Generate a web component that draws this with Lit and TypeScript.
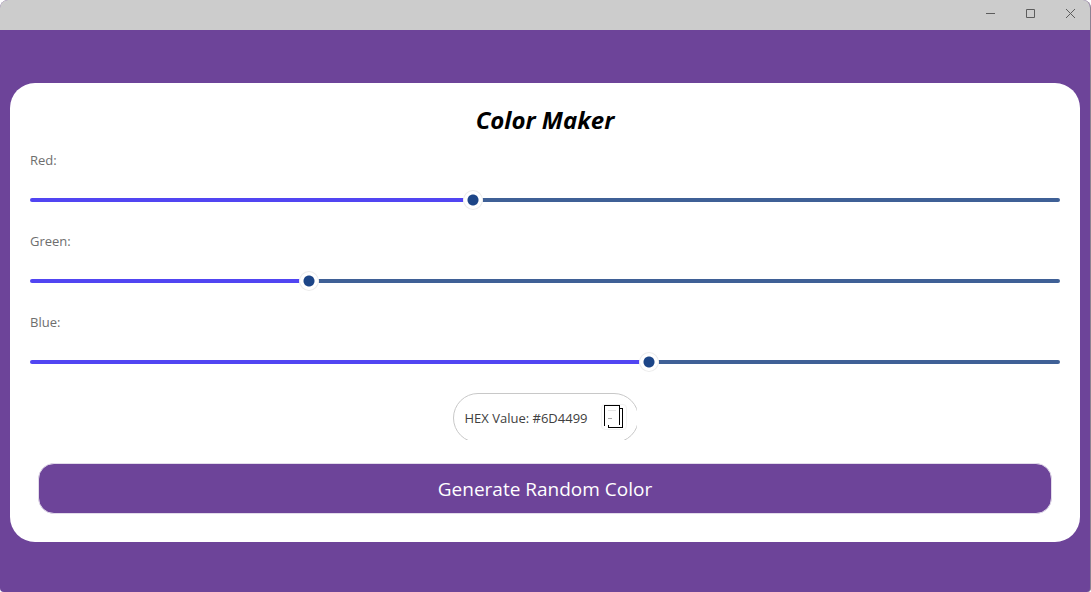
import { LitElement, html, css } from "lit";
import { customElement, property, state } from "lit/decorators.js";

@customElement("window-bar")
class WindowBar extends LitElement {
  static styles = css`
    :host {
      display: flex;
      justify-content: flex-end;
      height: 30px;
      background: #cccccc;
    }
    .control {
      width: 40px;
      height: 27px;
      padding: 0;
      border: 0;
      background: none;
      display: grid;
      place-items: center;
    }
    svg {
      width: 11px;
      height: 11px;
      fill: none;
      stroke: #5c5c5c;
    }
  `;

  render() {
    return html`
      <button class="control" aria-label="Minimize">
        <svg viewBox="0 0 11 11"><path d="M1 5.5H10" /></svg>
      </button>
      <button class="control" aria-label="Maximize">
        <svg viewBox="0 0 11 11"><path d="M1.5 1.5H9.5V9.5H1.5Z" /></svg>
      </button>
      <button class="control" aria-label="Close">
        <svg viewBox="0 0 11 11"><path d="M1 1L10 10M10 1L1 10" /></svg>
      </button>
    `;
  }
}

@customElement("color-slider")
class ColorSlider extends LitElement {
  @property() label = "";
  @property({ type: Number }) value = 0;

  static styles = css`
    :host {
      display: flex;
      flex-direction: column;
      gap: 14px;
    }
    label {
      font-size: 13px;
      line-height: 20px;
      color: #6e6e6e;
    }
    input {
      appearance: none;
      width: 100%;
      height: 32px;
      margin: 0;
      background: none;
    }
    input::-webkit-slider-runnable-track {
      height: 4px;
      border-radius: 2px;
      background: linear-gradient(
        to right,
        #5145f2 var(--fill),
        #3f6096 var(--fill)
      );
    }
    input::-webkit-slider-thumb {
      appearance: none;
      width: 20px;
      height: 20px;
      margin-top: -8px;
      border-radius: 50%;
      background: radial-gradient(circle, #1c4587 5px, #ffffff 6px);
      box-shadow: inset 0 0 0 1px #ececec;
    }
  `;

  private onInput(e: Event) {
    this.value = Number((e.target as HTMLInputElement).value);
    this.dispatchEvent(new CustomEvent("level", { detail: this.value }));
  }

  render() {
    return html`
      <label for="level">${this.label}:</label>
      <input
        id="level"
        type="range"
        min="0"
        max="255"
        step="any"
        .value=${String(this.value)}
        style="--fill: ${(this.value / 255) * 100}%"
        @input=${this.onInput}
      />
    `;
  }
}

@customElement("app-root")
class AppRoot extends LitElement {
  @state() private levels = [109.3, 68, 153.8];

  static styles = css`
    :host {
      display: flex;
      flex-direction: column;
      min-height: 100vh;
      box-sizing: border-box;
      border-right: 1px solid #8d8292;
      border-radius: 8px 8px 4px 4px;
      overflow: hidden;
      background: #6d4499;
      font-family: "Open Sans", "Noto Sans", sans-serif;
    }
    main {
      flex: 1;
      display: flex;
      flex-direction: column;
      justify-content: center;
      padding: 2px 10px 0;
    }
    .card {
      display: flex;
      flex-direction: column;
      gap: 15px;
      padding: 20px 20px 28px;
      border-radius: 25px;
      background: #ffffff;
    }
    h1 {
      margin: 0;
      padding-top: 2px;
      font-size: 24px;
      line-height: 30px;
      font-style: italic;
      font-weight: 700;
      text-align: center;
      color: #000000;
    }
    .hex {
      align-self: center;
      height: 47px;
      overflow: hidden;
    }
    .pill {
      display: flex;
      align-items: center;
      gap: 13px;
      height: 50px;
      box-sizing: border-box;
      margin-right: -2px;
      padding: 0 11px 0 10px;
      border: 1px solid #c8c8c8;
      border-radius: 25px;
      font-size: 13px;
      color: #404040;
    }
    .copy {
      width: 26px;
      height: 26px;
      margin: 0 0 2px;
      padding: 0;
      border: 1px solid #f2f2f2;
      border-radius: 4px;
      background: #ffffff;
      display: grid;
      place-items: center;
    }
    .copy svg {
      width: 24px;
      height: 24px;
      fill: none;
    }
    .generate {
      height: 51px;
      margin: 8px 8px 0;
      padding: 2px 0 0;
      border: 1px solid #e2dbea;
      border-radius: 16px;
      background: #6d4499;
      color: #ffffff;
      font-family: inherit;
      font-size: 19px;
    }
  `;

  private get hex() {
    return (
      "#" +
      this.levels
        .map((n) => Math.floor(n).toString(16).padStart(2, "0"))
        .join("")
        .toUpperCase()
    );
  }

  private setLevel(index: number, value: number) {
    this.levels = this.levels.map((n, i) => (i === index ? value : n));
  }

  private randomize() {
    this.levels = this.levels.map(() => Math.random() * 255);
  }

  render() {
    return html`
      <window-bar></window-bar>
      <main>
        <section class="card">
          <h1>Color Maker</h1>
          ${["Red", "Green", "Blue"].map(
            (name, i) => html`
              <color-slider
                label=${name}
                .value=${this.levels[i]}
                @level=${(e: CustomEvent) => this.setLevel(i, e.detail)}
              ></color-slider>
            `
          )}
          <div class="hex">
            <div class="pill">
              <span>HEX Value: ${this.hex}</span>
              <button
                class="copy"
                aria-label="Copy"
                @click=${() => navigator.clipboard?.writeText(this.hex)}
              >
                <svg viewBox="0 0 24 24" shape-rendering="crispEdges">
                  <path
                    d="M2.5 21V0.5H17.5V20M18 3.5H20.5V22.5H6.5V20"
                    stroke="#000000"
                  />
                  <path d="M6 5.5H14" stroke="#e4e4e4" />
                  <path d="M6 13.5H10" stroke="#a8a8a8" />
                </svg>
              </button>
            </div>
          </div>
          <button class="generate" @click=${this.randomize}>
            Generate Random Color
          </button>
        </section>
      </main>
    `;
  }
}
